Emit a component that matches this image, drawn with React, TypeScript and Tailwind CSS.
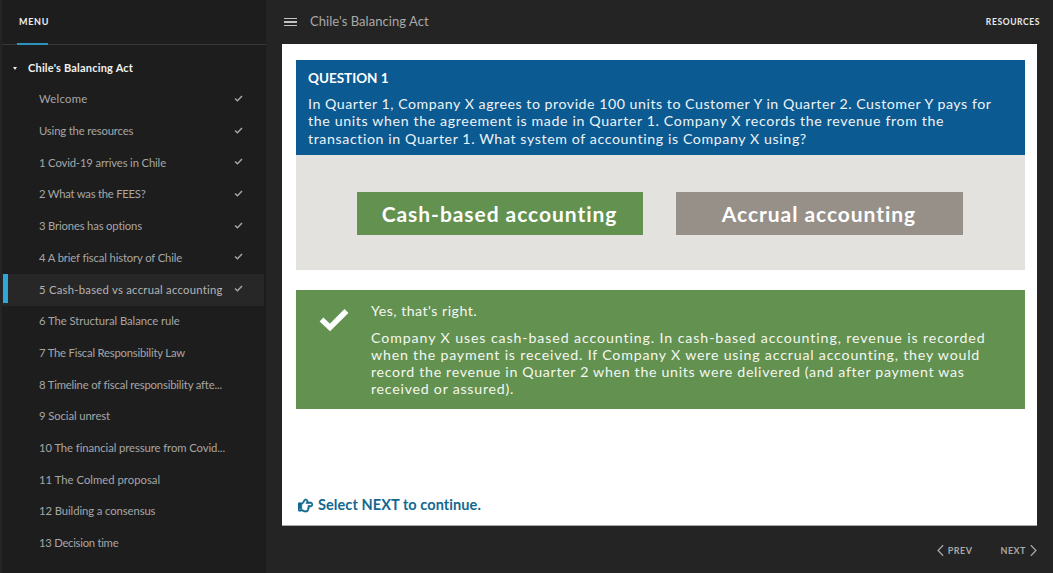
import { FaRegHandPointRight } from "react-icons/fa";

const items: [string, string][] = [
  ["Welcome", "tracking-[0.25px]"],
  ["Using the resources", "tracking-[-0.17px]"],
  ["1 Covid-19 arrives in Chile", "tracking-[-0.16px]"],
  ["2 What was the FEES?", "tracking-[-0.25px]"],
  ["3 Briones has options", "tracking-[-0.18px]"],
  ["4 A brief fiscal history of Chile", "tracking-[-0.15px]"],
  ["5 Cash-based vs accrual accounting", "tracking-[0.25px]"],
  ["6 The Structural Balance rule", "tracking-[-0.07px]"],
  ["7 The Fiscal Responsibility Law", "tracking-[-0.22px]"],
  ["8 Timeline of fiscal responsibility afte...", "tracking-[-0.19px]"],
  ["9 Social unrest", "tracking-[-0.11px]"],
  ["10 The financial pressure from Covid...", "tracking-[-0.09px]"],
  ["11 The Colmed proposal", "tracking-[0.01px]"],
  ["12 Building a consensus", "tracking-[-0.1px]"],
  ["13 Decision time", "tracking-[-0.28px]"],
];

function Check({ className }: { className: string }) {
  return (
    <svg viewBox="0 0 10 8" className={className} fill="none" stroke="currentColor" strokeWidth="1.7">
      <path d="M1 4 L3.8 6.6 L9 1.2" />
    </svg>
  );
}

function Chevron({ left }: { left?: boolean }) {
  return (
    <svg viewBox="0 0 8 14" className="w-[7px] h-[13px] text-[#a8a8a8]" fill="none" stroke="currentColor" strokeWidth="1.4">
      <path d={left ? "M7 1 L1.2 7 L7 13" : "M1 1 L6.8 7 L1 13"} />
    </svg>
  );
}

export default function App() {
  return (
    <div className="flex w-[1053px] h-[573px] overflow-hidden bg-[#242424] font-['Lato','Liberation_Sans',sans-serif]">
      <aside className="w-[266px] h-full shrink-0 pl-[2px] bg-[#242424]">
        <div className="h-full bg-[#1d1d1d] overflow-hidden">
          <div className="relative h-[45px] border-b border-[#3a3a3a] pl-[17px] pt-[15px] text-[9px] leading-[13px] font-bold tracking-[0.7px] text-[#eeeeee]">
            MENU
            <div className="absolute left-[15px] bottom-[-1px] w-[31px] h-[2px] bg-[#2b93bd]" />
          </div>
          <div className="flex items-center h-[20px] mt-[13px] pl-[11px] text-[11px] font-bold text-[#f0f0f0] tracking-[0.2px]">
            <span className="w-0 h-0 border-x-[2.5px] border-x-transparent border-t-[3px] border-t-[#eeeeee]" />
            <span className="ml-[11px]">Chile's Balancing Act</span>
          </div>
          <ul className="mt-[6px]">
            {items.map(([t, track], i) => (
              <li
                key={t}
                className={`flex items-center h-[31.7px] pl-[37px] text-[11.3px] text-[#a6a6a6] relative ${track} ${i === 6 ? "bg-[#272727] text-[#b4b4b4] mr-[2px]" : ""}`}
              >
                {i === 6 && <span className="absolute left-[1px] top-0 w-[5px] h-[29px] bg-[#2fa6dc]" />}
                <span className="whitespace-nowrap">{t}</span>
                {i < 7 && <Check className="absolute top-[11px] left-[232px] w-[9px] h-[7px] text-[#a6a6a6]" />}
              </li>
            ))}
          </ul>
        </div>
      </aside>
      <main className="flex-1 flex flex-col min-w-0">
        <header className="h-[44px] shrink-0 flex items-center pl-[18px] pr-[13px] text-[#a9a9a9]">
          <div className="flex flex-col gap-[2px] w-[13px]">
            <span className="h-[1.5px] bg-[#c2c2c2]" />
            <span className="h-[1.5px] bg-[#c2c2c2]" />
            <span className="h-[1.5px] bg-[#c2c2c2]" />
          </div>
          <span className="ml-[13px] text-[13px] tracking-[0.06px]">Chile's Balancing Act</span>
          <span className="ml-auto text-[8.5px] font-bold tracking-[0.6px] text-[#e8e8e8]">RESOURCES</span>
        </header>
        <div className="w-[755px] ml-[16px] h-[482px] bg-white border-b border-[#aaaaaa] pt-[16px] pl-[14px] pr-[12px] flex flex-col shrink-0">
          <section className="bg-[#0b5a91] h-[95px] pl-[12px] pt-[9px] text-white">
            <h2 className="text-[13.5px] leading-[18px] font-bold">QUESTION 1</h2>
            <div className="mt-[8px] text-[14.2px] leading-[17.4px] text-[#eef3f7] whitespace-nowrap">
              <p className="tracking-[0.52px]">In Quarter 1, Company X agrees to provide 100 units to Customer Y in Quarter 2. Customer Y pays for</p>
              <p className="tracking-[0.63px]">the units when the agreement is made in Quarter 1. Company X records the revenue from the</p>
              <p className="tracking-[0.6px]">transaction in Quarter 1. What system of accounting is Company X using?</p>
            </div>
          </section>
          <section className="bg-[#e3e2de] h-[115px] flex justify-center pt-[37px] gap-[33px] pr-[2px]">
            <button className="w-[286px] h-[43px] bg-[#639150] text-white text-[21px] font-bold tracking-[0.95px]">Cash-based accounting</button>
            <button className="w-[287px] h-[43px] bg-[#979089] text-white text-[21px] font-bold tracking-[0.95px]">Accrual accounting</button>
          </section>
          <section className="mt-[20px] bg-[#639150] h-[119px] flex text-[#f4f7f2]">
            <div className="w-[75px] shrink-0 pl-[23px] pt-[18px]">
              <svg viewBox="0 0 30 24" className="w-[30px] h-[24px] text-white" fill="none" stroke="currentColor" strokeWidth="5.5">
                <path d="M2.5 11.5 L11 19.5 L27.5 3" />
              </svg>
            </div>
            <div className="pt-[12px] text-[14.2px] leading-[17.1px] whitespace-nowrap">
              <p className="tracking-[0.47px]">Yes, that's right.</p>
              <div className="mt-[10px]">
                <p className="tracking-[0.89px]">Company X uses cash-based accounting. In cash-based accounting, revenue is recorded</p>
                <p className="tracking-[0.8px]">when the payment is received. If Company X were using accrual accounting, they would</p>
                <p className="tracking-[0.68px]">record the revenue in Quarter 2 when the units were delivered (and after payment was</p>
                <p className="tracking-[0.75px]">received or assured).</p>
              </div>
            </div>
          </section>
          <div className="mt-auto mb-[9px] pl-[2px] flex items-center gap-[5px] text-[#13688f] text-[14.5px] font-bold tracking-[0.08px]">
            <FaRegHandPointRight className="w-[15px] h-[15px] stroke-[20px]" />
            <span>Select NEXT to continue.</span>
          </div>
        </div>
        <footer className="flex-1 flex items-center justify-end pr-[16px] pt-[2px] gap-[28px] text-[9px] font-bold tracking-[0.5px] text-[#a8a8a8]">
          <div className="flex items-center gap-[4px]"><Chevron left /><span>PREV</span></div>
          <div className="flex items-center gap-[4px]"><span>NEXT</span><Chevron /></div>
        </footer>
      </main>
    </div>
  );
}
